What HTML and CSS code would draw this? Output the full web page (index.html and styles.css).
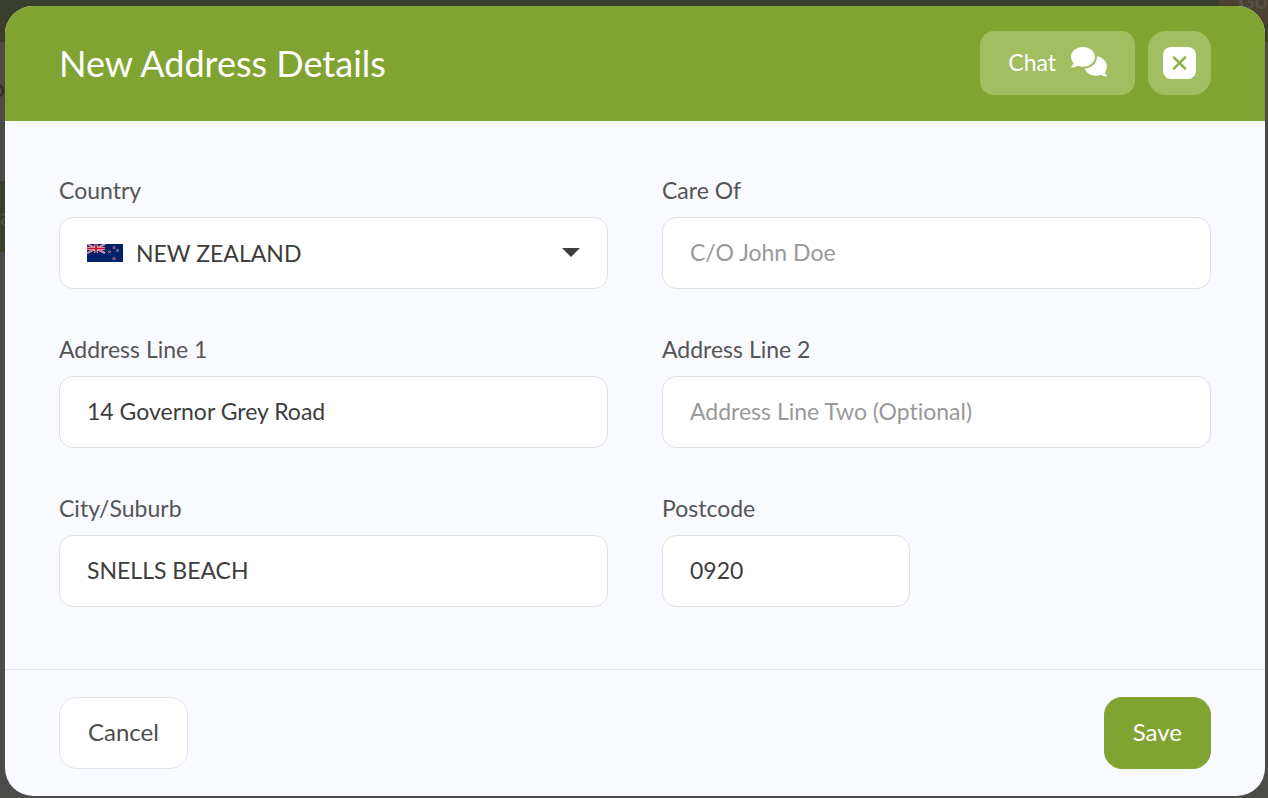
FILE: index.html
```html
<!DOCTYPE html>
<html lang="en">
<head>
<meta charset="utf-8">
<meta name="viewport" content="width=device-width, initial-scale=1">
<title>New Address Details</title>
<link rel="stylesheet" href="styles.css">
</head>
<body>
<div class="backdrop" aria-hidden="true">
  <div class="backdrop-bar"></div>
  <div class="backdrop-tile">Go</div>
  <div class="backdrop-heading">p</div>
  <div class="backdrop-tab">ta</div>
</div>
<form class="dialog" role="dialog" aria-labelledby="dialog-title">
  <header class="dialog-header">
    <h1 class="dialog-title" id="dialog-title">New Address Details</h1>
    <div class="header-actions">
      <button class="chat-button" type="button">
        <span>Chat</span>
        <svg class="chat-icon" viewBox="0 0 36 30" aria-hidden="true">
          <path d="M12 0C5.300 0 0 4.300 0 9.800c0 2.400.9 4.500 2.500 6.200C2 17.600 1.200 18.700.3 19.600c-.4.400-.1.900.4.900 2.200 0 4.300-.7 6-1.800 1.600.7 3.400 1 5.300 1 6.600 0 12-4.400 12-9.900S18.600 0 12 0z"/>
          <path d="M26 9.300c.1 6.900-5.200 11.700-12.300 12.500 1.600 4 5.900 6.900 11.100 6.900 1.800 0 3.500-.3 5-.9 1.600 1.100 3.400 1.600 5.500 1.600.5 0 .8-.6.4-.9-.8-.8-1.600-1.900-2-3.200 1.500-1.700 2.300-3.600 2.300-5.700 0-5-4.300-9.300-10-10.300z"/>
        </svg>
      </button>
      <button class="close-button" type="button" aria-label="Close">
        <svg class="close-icon" viewBox="0 0 33 32" aria-hidden="true">
          <rect class="close-face" width="33" height="32" rx="8"/>
          <path class="close-cross" d="M11 10.500l11 11M22 10.500l-11 11"/>
        </svg>
      </button>
    </div>
  </header>
  <div class="dialog-body">
    <div class="field">
      <label class="field-label" for="country">Country</label>
      <div class="select-wrap">
        <svg class="flag" viewBox="0 0 36 18" aria-hidden="true">
          <path fill="#012169" d="M0 0h36v18H0z"/>
          <path stroke="#e3c3d0" stroke-width="2" d="M0 0l18 9M18 0L0 9"/>
          <path stroke="#c8102e" stroke-width=".6" d="M0 0l18 9M18 0L0 9"/>
          <path stroke="#fff" stroke-width="3" d="M9 0v9M0 4.500h18"/>
          <path stroke="#c8102e" stroke-width="1.800" d="M9 0v9M0 4.500h18"/>
          <g fill="#c8102e" stroke="#c9b6cf" stroke-width=".4">
            <path d="M27 2l.4 1h1l-.8.7.3 1-.9-.6-.9.600.3-1-.8-.7h1z"/>
            <path d="M22.500 6.500l.4 1h1l-.8.7.3 1-.9-.6-.9.600.3-1-.8-.7h1z"/>
            <path d="M30.500 5l.4 1h1l-.8.7.3 1-.9-.6-.9.600.3-1-.8-.7h1z"/>
            <path d="M27 13l.5 1.100h1.100l-.8.7.3 1.100-1.100-.6-1.100.6.3-1.100-.8-.7h1.100z"/>
          </g>
        </svg>
        <select class="control country-select" id="country">
          <option>NEW ZEALAND</option>
        </select>
        <svg class="caret" viewBox="0 0 18 9" aria-hidden="true"><path d="M0 0h18L9 9z"/></svg>
      </div>
    </div>
    <div class="field">
      <label class="field-label" for="care-of">Care Of</label>
      <input class="control" id="care-of" type="text" placeholder="C/O John Doe">
    </div>
    <div class="field">
      <label class="field-label" for="line-1">Address Line 1</label>
      <input class="control" id="line-1" type="text" value="14 Governor Grey Road">
    </div>
    <div class="field">
      <label class="field-label" for="line-2">Address Line 2</label>
      <input class="control" id="line-2" type="text" placeholder="Address Line Two (Optional)">
    </div>
    <div class="field">
      <label class="field-label" for="city">City/Suburb</label>
      <input class="control" id="city" type="text" value="SNELLS BEACH">
    </div>
    <div class="field">
      <label class="field-label" for="postcode">Postcode</label>
      <input class="control control-short" id="postcode" type="text" value="0920">
    </div>
  </div>
  <footer class="dialog-footer">
    <button class="button" type="button">Cancel</button>
    <button class="button button-primary" type="submit">Save</button>
  </footer>
</form>
</body>
</html>
```
FILE: styles.css
```css
* { box-sizing: border-box; }

body {
  margin: 0;
  min-height: 100vh;
  padding: 6px 3px 2px 5px;
  background: #4b4c4a;
  color: #3d3d3d;
  font-family: Lato, "Open Sans", sans-serif;
  font-size: 23px;
  font-variant-ligatures: none;
  line-height: 28px;
}

button, input, select {
  font: inherit;
  font-variant-ligatures: none;
  color: inherit;
}

/* Dimmed page behind the dialog */
.backdrop {
  position: absolute;
  inset: 0;
  z-index: -1;
  overflow: hidden;
}
.backdrop-bar { height: 42px; background: #393f2c; }
.backdrop-tile {
  position: absolute;
  top: 0;
  right: 0;
  width: 49px;
  height: 24px;
  padding-left: 19px;
  background: #4a4130;
  color: #56524a;
  font-weight: 700;
  line-height: 0;
  text-indent: 0;
}
.backdrop-heading {
  position: absolute;
  top: 74px;
  left: -8px;
  color: #2b2b2b;
}
.backdrop-tab {
  position: absolute;
  top: 181px;
  left: 0;
  width: 50%;
  height: 71px;
  background: #393f2c;
  color: #4f544a;
  line-height: 71px;
  text-indent: -8px;
}

.dialog {
  overflow: hidden;
  border-radius: 28px;
  background: #f9faff;
}

.dialog-header {
  display: flex;
  align-items: center;
  justify-content: space-between;
  min-height: 115px;
  padding: 0 54px 2px;
  background: #80a432;
  color: #fff;
}
.dialog-title {
  margin: 0;
  font-size: 36px;
  font-weight: 400;
  line-height: 44px;
}
.header-actions { display: flex; align-items: center; gap: 13px; }
.chat-button, .close-button {
  display: flex;
  align-items: center;
  justify-content: center;
  height: 64px;
  border: 0;
  background: #a1be61;
}
.chat-button { gap: 15px; padding: 0 28px 2px; border-radius: 14px; }
.close-button { width: 63px; padding: 0; border-radius: 18px; }
.chat-icon { width: 36px; height: 30px; fill: #fff; }
.close-icon { width: 33px; height: 32px; }
.close-face { fill: #fff; }
.close-cross {
  fill: none;
  stroke: #8fb04a;
  stroke-width: 2.5;
  stroke-linecap: round;
}

.dialog-body {
  display: grid;
  grid-template-columns: 1fr 1fr;
  gap: 46px 54px;
  padding: 55px 54px 62px;
}
.field { display: flex; flex-direction: column; gap: 13px; }
.field-label { color: #555; }
.control {
  width: 100%;
  height: 72px;
  padding: 0 27px 3px;
  border: 1px solid #dfe0e3;
  border-radius: 14px;
  background: #fff;
}
.control::placeholder { color: #999; opacity: 1; }
.control-short { width: 248px; }
.select-wrap { position: relative; }
.country-select { padding: 0 76px; appearance: none; }
.flag {
  position: absolute;
  top: 27px;
  left: 28px;
  width: 36px;
  height: 18px;
}
.caret {
  position: absolute;
  top: 31px;
  right: 28px;
  width: 18px;
  height: 9px;
  fill: #3d3d3d;
  pointer-events: none;
}

.dialog-footer {
  display: flex;
  justify-content: space-between;
  padding: 27px 54px;
  border-top: 1px solid #e3e4e8;
}
.button {
  height: 72px;
  padding: 0 28px 2px;
  border: 1px solid #e3e4e8;
  border-radius: 18px;
  background: #fff;
  color: #4d4d4d;
  font-size: 24px;
}
.button-primary {
  border-color: #80a432;
  background: #80a432;
  color: #fff;
}
```
